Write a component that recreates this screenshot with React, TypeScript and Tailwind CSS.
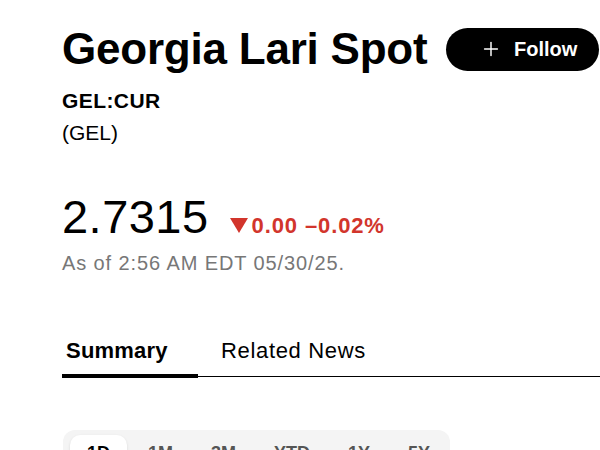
import { Plus } from "lucide-react";

const ranges = ["1D", "1M", "3M", "YTD", "1Y", "5Y"];

export default function App() {
  return (
    <div className="w-[600px] h-[450px] overflow-hidden bg-white text-black font-['Liberation_Sans',Arial,sans-serif]">
      <div className="pl-[62px]">
        {/* header */}
        <div className="flex items-center justify-between pt-[27px] pr-[1px]">
          <h1 className="text-[44px] leading-[44px] font-bold tracking-[-0.005em]">Georgia Lari Spot</h1>
          <button className="h-[43px] w-[153px] rounded-full bg-black text-white flex items-center pl-[34px] gap-[12px]">
            <Plus size={22} strokeWidth={1.6} />
            <span className="text-[20px] font-semibold">Follow</span>
          </button>
        </div>
        <div className="mt-[14px] text-[21px] leading-[32px] font-bold tracking-[0.02em]">GEL:CUR</div>
        <div className="text-[21px] leading-[32px]">(GEL)</div>

        {/* quote */}
        <div className="mt-[45px] flex items-baseline">
          <span className="text-[47px] leading-[46px] tracking-[0.01em]">2.7315</span>
          <span className="ml-[21px] flex items-baseline text-[#d2352c] text-[22px] font-semibold tracking-[0.04em]">
            <svg width="18" height="15" viewBox="0 0 18 15" className="mr-[4px]">
              <path d="M0 0 H18 L9 15 Z" fill="#d2352c" />
            </svg>
            0.00 –0.02%
          </span>
        </div>
        <div className="mt-[7px] text-[20px] leading-[28px] text-[#777] tracking-[0.045em]">As of 2:56 AM EDT 05/30/25.</div>

        {/* tabs */}
        <div className="mt-[60px] flex border-b-[1.5px] border-black">
          <div className="w-[136px] pl-[4px] pb-[7px] border-b-[4px] border-black -mb-[1.5px]">
            <span className="text-[22px] leading-[28px] font-bold tracking-[0.01em]">Summary</span>
          </div>
          <div className="pl-[23px] pb-[11px]">
            <span className="text-[22px] leading-[28px] tracking-[0.03em]">Related News</span>
          </div>
        </div>

        {/* range selector */}
        <div className="mt-[53px] w-[387px] ml-[1px] rounded-[12px] bg-[#f4f4f4] pt-[5px] pl-[7px] flex gap-[4px]">
          {ranges.map((r, i) => (
            <div
              key={r}
              className={
                i === 0
                  ? "rounded-[10px] bg-white px-[17px] pt-[7px] pb-[8px] text-[18px] leading-[22px] font-bold text-black shadow-sm"
                  : "px-[17px] pt-[7px] pb-[8px] text-[18px] leading-[22px] font-semibold text-[#555]"
              }
            >
              {r}
            </div>
          ))}
        </div>
      </div>
    </div>
  );
}
